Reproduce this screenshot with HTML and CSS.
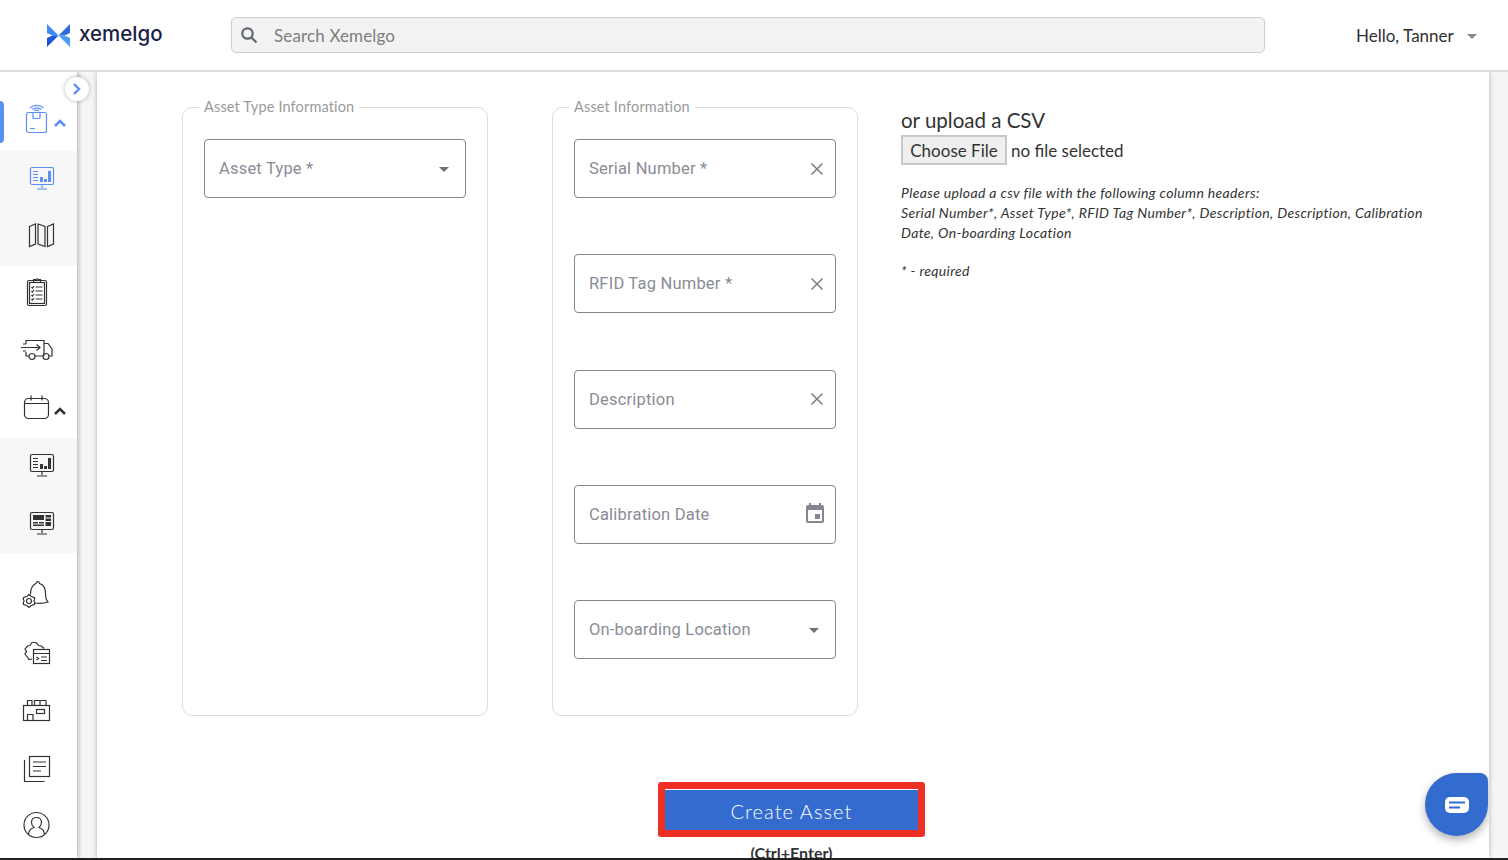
FILE: index.html
```html
<!DOCTYPE html>
<html lang="en">

<head>
    <meta charset="UTF-8">
    <title>Xemelgo - Create Asset</title>
    <link rel="stylesheet" href="styles.css">
</head>

<body>
    <header class="topbar">
        <div class="brand">
            <svg class="brand-mark" width="23" height="23" viewBox="0 0 23 23">
                <path d="M0 0l11.500 11.500H5.500L0 9z" fill="#3a8cf0" />
                <path d="M0 23l11.500-11.500H5.500L0 14z" fill="#1f55d8" />
                <path d="M23 0L11.500 11.500h6L23 9z" fill="#2a6de0" />
                <path d="M23 23L11.500 11.500h6L23 14z" fill="#4c9af3" />
            </svg>
            <span class="brand-name">xemelgo</span>
        </div>
        <div class="search">
            <svg width="18" height="18" viewBox="0 0 18 18" fill="none" stroke="#5f6670" stroke-width="2.2">
                <circle cx="7.500" cy="7.500" r="5.200" />
                <path d="M11.500 11.500l5 5" />
            </svg>
            <span>Search Xemelgo</span>
        </div>
        <div class="user">
            <span>Hello, Tanner</span>
            <span class="caret"></span>
        </div>
    </header>

    <div class="page">
        <nav class="sidebar">
            <div class="nav-item selected">
                <svg class="icon" width="32" height="32" viewBox="0 0 32 32">
                    <path d="M9 5c3.500-3.500 10-3.500 13.500 0M11.200 6.500c2.500-2.300 6.600-2.300 9.100 0M13.300 8c1.300-1 3.500-1 4.900 0" />
                    <rect x="5.500" y="9.500" width="20" height="20" rx="2" />
                    <path d="M12 10v4.500a1 1 0 0 0 1 1h5a1 1 0 0 0 1-1V10M9 25.500h5" />
                </svg>
                <svg class="chevron" width="12" height="8" viewBox="0 0 12 8"><path d="M1 7l5-5 5 5" /></svg>
            </div>
            <div class="subnav">
                <div class="nav-item sub active">
                    <svg class="icon" width="32" height="32" viewBox="0 0 32 32">
                        <rect x="4.500" y="6.500" width="23" height="17" rx="1.500" />
                        <path d="M16 24v3M11 28h10M7 10.500h5M7 13.500h5M7 16.500h5M7 19.500h5" />
                        <path class="solid" d="M14 16h3v5h-3zM18 18h3v3h-3zM22 10h3v11h-3z" />
                    </svg>
                </div>
                <div class="nav-item sub">
                    <svg class="icon" width="32" height="32" viewBox="0 0 32 32">
                        <path d="M3.500 8.500l6-2.500v20l-6 2.500zM12 6l7 2.500v20L12 26zM21.500 8.500l6-2.500v20l-6 2.500z" />
                    </svg>
                </div>
            </div>
            <div class="nav-item">
                <svg class="icon" width="32" height="32" viewBox="0 0 32 32">
                    <rect x="6.500" y="4.500" width="19" height="25" rx="1.500" />
                    <rect x="8.500" y="6.500" width="15" height="21" />
                    <path d="M12.500 4.500V3.500h2.500a1.500 1.500 0 0 1 2.500 0h2v3h-7zM14.500 11h7M14.500 15h7M14.500 19h7M14.500 23h7M10.500 11l1 1 1.500-2M10.500 15l1 1 1.500-2M10.500 19l1 1 1.500-2M10.500 23l1 1 1.500-2" />
                </svg>
            </div>
            <div class="nav-item">
                <svg class="icon" width="32" height="32" viewBox="0 0 32 32">
                    <path d="M5 11V7.500h18V23M8 23H5v-4M23 10.500h4l4 5.500v7h-3M22 23h-8" />
                    <path d="M0 14.500h18.500M15.500 11.500l3.500 3-3.500 3M2 11h3M2 18h3" />
                    <circle cx="11" cy="23.500" r="3" />
                    <circle cx="25" cy="23.500" r="3" />
                </svg>
            </div>
            <div class="nav-item">
                <svg class="icon" width="32" height="32" viewBox="0 0 32 32">
                    <rect x="3.500" y="7.500" width="24" height="20" rx="4" />
                    <path d="M3.500 12.500h24M10 4.500v5M21 4.500v5" />
                </svg>
                <svg class="chevron dark" width="12" height="8" viewBox="0 0 12 8"><path d="M1 7l5-5 5 5" /></svg>
            </div>
            <div class="subnav">
                <div class="nav-item sub">
                    <svg class="icon" width="32" height="32" viewBox="0 0 32 32">
                        <rect x="4.500" y="6.500" width="23" height="17" rx="1.500" />
                        <path d="M16 24v3M11 28h10M7 10.500h5M7 13.500h5M7 16.500h5M7 19.500h5" />
                        <path class="solid" d="M14 16h3v5h-3zM18 18h3v3h-3zM22 10h3v11h-3z" />
                    </svg>
                </div>
                <div class="nav-item sub">
                    <svg class="icon" width="32" height="32" viewBox="0 0 32 32">
                        <rect x="4.500" y="6.500" width="23" height="17" rx="1.500" />
                        <path d="M16 24v3M11 28h10" />
                        <path class="solid" d="M7 9h11v5H7zM19.500 9H25v2.500h-5.500zM19.500 12.500H25V15h-5.500zM7 16h5v1.500H7zM13 16h5v1.500h-5zM19.500 16H25v4h-5.500zM7 18.500h11V20H7z" />
                    </svg>
                </div>
            </div>
            <div class="nav-group">
                <div class="nav-item">
                    <svg class="icon" width="32" height="32" viewBox="0 0 32 32">
                        <path d="M14 24c4.500.8 9 .5 13-1-1.500-1.500-2.500-4-2.500-8.500 0-5-2.500-9-6-10-.3-2.500-3.200-2.500-3.500 0-3 1-5.500 5-5.500 10v1" />
                        <path d="M8 15.500l2 1.700 3.600 1.500v2l-.8 1.300.8 1.300v2L10 26.800l-2 1.700-2-1.700-3.600-1.500v-2l.8-1.300-.8-1.300v-2L6 17.200z" />
                        <circle cx="8" cy="22" r="2.500" />
                    </svg>
                </div>
                <div class="nav-item">
                    <svg class="icon" width="32" height="32" viewBox="0 0 32 32">
                        <path d="M11 22l-3 .5-2-3-2-2.500 1.500-2.500-1.500-2.500L6.500 9l2.500-.5L11 5.500h4l2.500 3 3 .5 2.500 2.500" />
                        <rect x="12.500" y="12.500" width="16" height="14" />
                        <path d="M12.500 16.500h16M20 20h6M20 23.500h6M15.500 20l2 1.500-2 1.500" />
                    </svg>
                </div>
                <div class="nav-item">
                    <svg class="icon" width="32" height="32" viewBox="0 0 32 32">
                        <rect x="2.500" y="11.500" width="26" height="15" />
                        <path d="M6.500 26.500v-6h5.500v6M6.500 11.500v-5h4.500v5M13.500 11.500v-5h11.500v5M19 6.500v5" />
                        <rect x="15.500" y="15.500" width="8" height="4" />
                    </svg>
                </div>
                <div class="nav-item">
                    <svg class="icon" width="32" height="32" viewBox="0 0 32 32">
                        <rect x="8.500" y="4.500" width="20" height="20" />
                        <path d="M12 10h13M12 14.500h13M12 19h8M3.500 8v21.500h20" />
                    </svg>
                </div>
                <div class="nav-item">
                    <svg class="icon" width="32" height="32" viewBox="0 0 32 32">
                        <circle cx="15.500" cy="16" r="12.500" />
                        <path d="M7.500 26c0-5 2-6.500 5.500-7.500-1.800-1.500-2.500-3-2.500-5 0-3 2-5 5-5s5 2 5 5c0 2-.7 3.500-2.500 5 3.500 1 5.500 2.500 5.500 7.500" />
                    </svg>
                </div>
            </div>
        </nav>

        <button class="collapse" aria-label="Expand">
            <svg width="10" height="14" viewBox="0 0 10 14"><path d="M2 2l5 5-5 5" /></svg>
        </button>

        <main class="content">
            <div class="form-row">
                <fieldset class="group">
                    <legend>Asset Type Information</legend>
                    <div class="field-list">
                        <div class="field">
                            <span>Asset Type *</span>
                            <span class="caret dark"></span>
                        </div>
                    </div>
                </fieldset>

                <fieldset class="group">
                    <legend>Asset Information</legend>
                    <div class="field-list">
                        <div class="field">
                            <span>Serial Number *</span>
                            <svg class="clear" width="14" height="14" viewBox="0 0 14 14"><path d="M1.500 1.500l11 11M12.500 1.500l-11 11" /></svg>
                        </div>
                        <div class="field">
                            <span>RFID Tag Number *</span>
                            <svg class="clear" width="14" height="14" viewBox="0 0 14 14"><path d="M1.500 1.500l11 11M12.500 1.500l-11 11" /></svg>
                        </div>
                        <div class="field">
                            <span>Description</span>
                            <svg class="clear" width="14" height="14" viewBox="0 0 14 14"><path d="M1.500 1.500l11 11M12.500 1.500l-11 11" /></svg>
                        </div>
                        <div class="field">
                            <span>Calibration Date</span>
                            <svg class="date" width="24" height="24" viewBox="0 0 24 24">
                                <path d="M17 12h-5v5h5v-5zM16 1v2H8V1H6v2H5c-1.110 0-1.990.9-1.990 2L3 19a2 2 0 0 0 2 2h14c1.100 0 2-.9 2-2V5c0-1.100-.9-2-2-2h-1V1h-2zm3 18H5V8h14v11z" />
                            </svg>
                        </div>
                        <div class="field">
                            <span>On-boarding Location</span>
                            <span class="caret dark"></span>
                        </div>
                    </div>
                </fieldset>

                <section class="upload">
                    <h3>or upload a CSV</h3>
                    <div class="file-row">
                        <span class="file-button">Choose File</span>
                        <span>no file selected</span>
                    </div>
                    <p class="hint">Please upload a csv file with the following column headers:<br>
                        Serial Number*, Asset Type*, RFID Tag Number*, Description, Description, Calibration Date, On-boarding Location</p>
                    <p class="hint">* - required</p>
                </section>
            </div>

            <div class="actions">
                <div class="highlight">
                    <button class="create">Create Asset</button>
                </div>
                <div class="shortcut">(Ctrl+Enter)</div>
            </div>

            <div class="chat">
                <svg width="24" height="16" viewBox="0 0 24 16">
                    <rect width="24" height="16" rx="5" fill="#fff" />
                    <path d="M4 5.500h16M4 10.500h11" stroke="#346bce" stroke-width="2" />
                </svg>
            </div>
        </main>
    </div>
    <div class="edge"></div>
</body>

</html>
```

FILE: styles.css
```css
* {
    box-sizing: border-box;
}

html,
body {
    margin: 0;
    height: 860px;
    overflow: hidden;
}

body {
    display: flex;
    flex-direction: column;
    font-family: Lato, "Liberation Sans", sans-serif;
    color: #333;
    background-color: #f5f5f5;
}

.topbar {
    height: 72px;
    flex: none;
    display: flex;
    align-items: center;
    background-color: #fff;
    border-bottom: 2px solid #dedede;
    position: relative;
    z-index: 2;
}

.brand {
    width: 231px;
    padding-left: 47px;
    display: flex;
    align-items: center;
    gap: 9px;
}

.brand-name {
    font-family: Inter, "Liberation Sans", sans-serif;
    font-size: 20.500px;
    font-weight: 500;
    color: #1b2145;
    position: relative;
    top: -2px;
}

.search {
    width: 1034px;
    height: 36px;
    display: flex;
    align-items: center;
    gap: 16px;
    padding-left: 8px;
    font-size: 17px;
    letter-spacing: 0.15px;
    color: #7d7d7d;
    background-color: #f2f2f2;
    border: 1px solid #cfcfcf;
    border-radius: 5px;
}

.user {
    margin-left: 91px;
    display: flex;
    align-items: center;
    gap: 13px;
    font-size: 17px;
    color: #2f2f2f;
}

.caret {
    width: 0;
    height: 0;
    flex: none;
    border-left: 5px solid transparent;
    border-right: 5px solid transparent;
    border-top: 5px solid #8a8a8a;
    position: relative;
    top: 1px;
}

.caret.dark {
    border-top-color: #6f6f78;
    margin-right: 4px;
}

.page {
    flex: 1;
    min-height: 0;
    display: flex;
    position: relative;
}

.sidebar {
    width: 77px;
    flex: none;
    padding-top: 21px;
    background-color: #fff;
    box-shadow: 2px 0 4px rgba(0, 0, 0, 0.22);
}

.nav-item {
    height: 57.500px;
    padding: 0 0 5px 21px;
    display: flex;
    align-items: center;
    position: relative;
}

.nav-item.sub {
    padding-left: 26px;
}

.subnav {
    background-color: #f7f7f7;
}

.nav-group {
    margin-top: 16px;
}

.icon {
    flex: none;
    fill: none;
    stroke: #333;
    stroke-width: 1.200;
}

.icon .solid {
    fill: #333;
    stroke: none;
}

.selected .icon,
.active .icon {
    stroke: #5b8ff5;
}

.selected .icon .solid,
.active .icon .solid {
    fill: #5b8ff5;
}

.selected::before {
    content: "";
    position: absolute;
    left: 0;
    top: 8px;
    width: 4px;
    height: 42px;
    background-color: #5b8ff5;
    border-radius: 0 4px 4px 0;
}

.chevron {
    flex: none;
    margin-left: 1px;
    margin-top: 8px;
    fill: none;
    stroke: #5b8ff5;
    stroke-width: 2.500;
}

.chevron.dark {
    stroke: #333;
}

.collapse {
    position: absolute;
    left: 65px;
    top: 5px;
    width: 24px;
    height: 24px;
    padding: 0;
    border: 0;
    border-radius: 50%;
    display: flex;
    align-items: center;
    justify-content: center;
    background-color: #fff;
    box-shadow: 0 0 4px rgba(0, 0, 0, 0.3);
    z-index: 3;
}

.collapse svg {
    fill: none;
    stroke: #5b8ff5;
    stroke-width: 2.400;
}

.content {
    width: 1392px;
    margin-left: 20px;
    padding-top: 25.500px;
    background-color: #fff;
    position: relative;
    overflow: hidden;
    box-shadow: 0 0 5px rgba(0, 0, 0, 0.28);
}

.form-row {
    display: flex;
    height: 618.500px;
    margin-left: 85px;
}

.group {
    width: 306px;
    margin: 0 64px 0 0;
    padding: 21.500px 21px 0;
    border: 1px solid #dcdcdc;
    border-radius: 10px;
}

.group:nth-child(2) {
    margin-right: 43px;
}

.group legend {
    margin-left: -5px;
    padding: 0 5px 3px;
    font-size: 14.500px;
    letter-spacing: 0.15px;
    color: #9a9a9a;
}

.field-list {
    display: flex;
    flex-direction: column;
    gap: 56.250px;
}

.field {
    height: 59px;
    padding: 0 12px 0 14px;
    display: flex;
    align-items: center;
    justify-content: space-between;
    font-family: Roboto, "Liberation Sans", sans-serif;
    font-size: 16.500px;
    letter-spacing: 0.2px;
    color: #8b8b96;
    border: 1px solid #85858f;
    border-radius: 4px;
}

.clear {
    flex: none;
    margin-right: -1px;
    fill: none;
    stroke: #7c7c86;
    stroke-width: 1.500;
}

.date {
    fill: #85858f;
    margin-right: -4px;
    flex: none;
}

.upload {
    width: 530px;
    padding-top: 7.500px;
}

.upload h3 {
    margin: 0;
    font-size: 20.500px;
    font-weight: 400;
    line-height: 30px;
    color: #333;
}

.file-row {
    display: flex;
    align-items: center;
    gap: 4px;
    font-size: 17px;
}

.file-button {
    width: 106px;
    height: 30px;
    display: flex;
    align-items: center;
    justify-content: center;
    background-color: #efefef;
    border: 2px solid #c8c8c8;
}

.hint {
    margin: 18px 0 0;
    font-size: 14px;
    font-style: italic;
    letter-spacing: 0.35px;
    line-height: 20px;
    color: #333;
}

.hint + .hint {
    margin-top: 18px;
}

.actions {
    margin-top: 66px;
    padding-right: 3px;
    display: flex;
    flex-direction: column;
    align-items: center;
}

.highlight {
    width: 267px;
    height: 55px;
    padding: 7px;
    background-color: #ee3124;
    border-radius: 3px;
}

.create {
    width: 100%;
    height: 100%;
    padding: 2px 0 0;
    border: 0;
    border-top: 1px solid #fff;
    font-family: inherit;
    font-size: 20px;
    font-weight: 300;
    letter-spacing: 1.050px;
    color: #fff;
    background-color: #346bce;
}

.shortcut {
    margin-top: 7px;
    font-size: 16px;
    font-weight: 700;
    line-height: 17px;
    color: #333;
}

.chat {
    position: absolute;
    right: 1px;
    top: 701px;
    width: 63px;
    height: 63px;
    display: flex;
    align-items: center;
    justify-content: center;
    background-color: #346bce;
    border-radius: 50% 8px 50% 50%;
    box-shadow: 0 4px 8px rgba(0, 0, 0, 0.3);
}

.edge {
    height: 2px;
    flex: none;
    background-color: #222;
}
```
